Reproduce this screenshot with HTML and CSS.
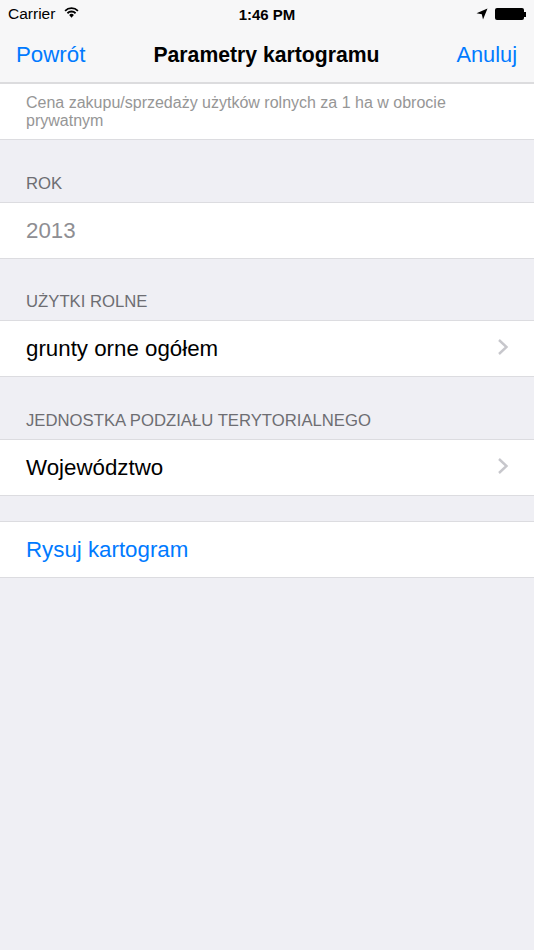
FILE: index.html
```html
<!DOCTYPE html>
<html lang="pl">
<head>
    <meta charset="UTF-8">
    <meta name="viewport" content="width=device-width, initial-scale=1.0">
    <title>Parametry kartogramu</title>
    <link rel="stylesheet" href="styles.css">
</head>
<body>
    <div class="header">
        <div class="status-bar">
            <div class="status-left">
                <span>Carrier</span>
                <svg class="wifi" width="15" height="12" viewBox="0 0 16 12">
                    <path d="M0.5 4 A10.5 10.5 0 0 1 15.5 4 L14.2 5.4 A8.6 8.6 0 0 0 1.8 5.4 Z" fill="#000"/>
                    <path d="M3 6.6 A7 7 0 0 1 13 6.6 L11.7 8 A5.2 5.2 0 0 0 4.3 8 Z" fill="#000"/>
                    <path d="M5.5 9.2 A3.5 3.5 0 0 1 10.5 9.2 L8 12 Z" fill="#000"/>
                </svg>
            </div>
            <div class="status-time">1:46 PM</div>
            <div class="status-right">
                <svg width="12" height="12" viewBox="0 0 12 12">
                    <path d="M11.5 0.5 L0.5 5.2 L5.8 6.2 L7 11.5 Z" fill="#000"/>
                </svg>
                <div class="battery"></div>
                <div class="battery-tip"></div>
            </div>
        </div>
        <div class="nav-bar">
            <a class="nav-link">Powrót</a>
            <div class="nav-title">Parametry kartogramu</div>
            <a class="nav-link nav-cancel">Anuluj</a>
        </div>
    </div>

    <div class="description">Cena zakupu/sprzedaży użytków rolnych za 1 ha w obrocie prywatnym</div>

    <div class="section-label">ROK</div>
    <div class="row row-muted">2013</div>

    <div class="section-label">UŻYTKI ROLNE</div>
    <div class="row">
        <span>grunty orne ogółem</span>
        <svg class="chevron" width="12" height="18" viewBox="0 0 12 18">
            <path d="M2 2 L9.5 9 L2 16" fill="none" stroke="#c7c7cc" stroke-width="2.4"/>
        </svg>
    </div>

    <div class="section-label">JEDNOSTKA PODZIAŁU TERYTORIALNEGO</div>
    <div class="row">
        <span>Województwo</span>
        <svg class="chevron" width="12" height="18" viewBox="0 0 12 18">
            <path d="M2 2 L9.5 9 L2 16" fill="none" stroke="#c7c7cc" stroke-width="2.4"/>
        </svg>
    </div>

    <div class="row row-action">Rysuj kartogram</div>
</body>
</html>
```

FILE: styles.css
```css
html, body {
    height: 100%;
}
body {
    margin: 0;
    background-color: #efeff4;
    font-family: "Liberation Sans", Arial, sans-serif;
    color: #000;
}
.header {
    background: #f7f7f8;
    border-bottom: 2px solid #dcdcde;
}
.status-bar {
    height: 28px;
    padding: 0 8px;
    display: flex;
    align-items: center;
    justify-content: space-between;
    font-size: 15.5px;
}
.status-left {
    display: flex;
    align-items: center;
    gap: 9px;
    width: 150px;
}
.wifi {
    margin-top: -5px;
}
.status-time {
    font-weight: bold;
    font-size: 15px;
}
.status-right {
    display: flex;
    align-items: center;
    justify-content: flex-end;
    width: 150px;
}
.battery {
    width: 29px;
    height: 12px;
    margin-left: 7px;
    background: #000;
    border-radius: 2px;
}
.battery-tip {
    width: 2px;
    height: 5px;
    background: #000;
}
.nav-bar {
    height: 54px;
    padding: 0 17px 0 16px;
    display: flex;
    align-items: center;
}
.nav-link {
    flex: 1;
    color: #007aff;
    font-size: 22.3px;
}
.nav-cancel {
    font-size: 21.8px;
    text-align: right;
}
.nav-title {
    font-size: 21.2px;
    font-weight: bold;
}
.description {
    background: #fff;
    border-bottom: 1px solid #dcdce0;
    padding: 10px 26px 9px;
    font-size: 16px;
    line-height: 18px;
    color: #969696;
}
.section-label {
    padding: 33.6px 26px 8px;
    font-size: 16.7px;
    line-height: 20px;
    color: #6d6d72;
}
.row {
    background: #fff;
    border-top: 1px solid #dcdce0;
    border-bottom: 1px solid #dcdce0;
    height: 54px;
    padding: 1px 25px 0 26px;
    display: flex;
    align-items: center;
    justify-content: space-between;
    font-size: 22.3px;
}
.chevron {
    margin-top: -4px;
}
.row-muted {
    color: #8e8e93;
}
.row-action {
    margin-top: 25px;
    color: #007aff;
}
```
